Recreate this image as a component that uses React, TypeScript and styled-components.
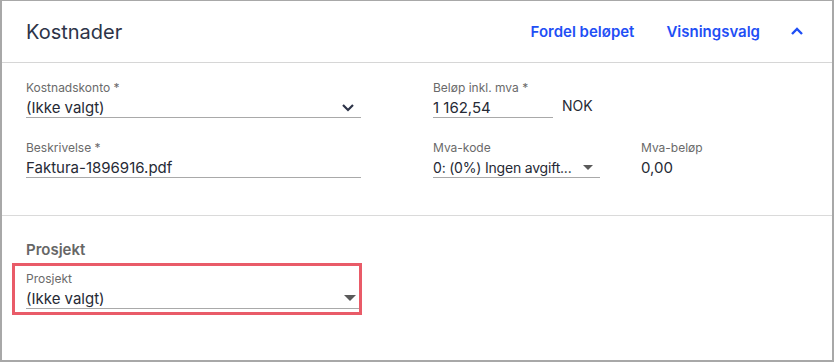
import React, { FC } from 'react'
import styled, { createGlobalStyle } from 'styled-components'

const GlobalStyle = createGlobalStyle`
  html, body {
    margin: 0;
    padding: 0;
    background: #ffffff;
  }
  body {
    font-family: Inter, 'Noto Sans', 'Liberation Sans', sans-serif;
  }
`

const Frame = styled.div`
  width: 834px;
  height: 362px;
  box-sizing: border-box;
  border: 2px solid #a8a8a8;
  border-top-width: 1px;
  background: #fff;
  display: flex;
  flex-direction: column;
`

const Header = styled.div`
  height: 62px;
  flex-shrink: 0;
  box-sizing: border-box;
  display: flex;
  align-items: center;
  padding: 0 28px 0 24px;
  border-bottom: 1px solid #d6d6d6;
`

const Title = styled.h2`
  margin: 0;
  flex: 1;
  font-size: 20px;
  font-weight: 400;
  color: #2d3448;
`

const Actions = styled.div`
  display: flex;
  align-items: center;
  gap: 32px;
`

const LinkButton = styled.button`
  border: 0;
  background: none;
  padding: 0;
  font-family: inherit;
  font-size: 15px;
  font-weight: 600;
  color: #1f4ff5;
  cursor: pointer;
`

const CollapseButton = styled(LinkButton)`
  display: flex;
  align-items: center;
  margin-left: -2px;
`

const FieldsSection = styled.div`
  display: grid;
  grid-template-columns: 335px 1fr;
  grid-auto-rows: min-content;
  align-content: start;
  column-gap: 72px;
  row-gap: 22px;
  padding: 17px 24px 0 24px;
  height: 153px;
  flex-shrink: 0;
  box-sizing: border-box;
  border-bottom: 1px solid #dadada;
`

const InlineRow = styled.div`
  display: flex;
  align-items: flex-end;
  gap: 41px;
`

const Field = styled.div<{ $width?: number }>`
  display: flex;
  flex-direction: column;
  min-width: 0;
  width: ${({ $width }) => ($width ? `${$width}px` : 'auto')};
`

const Label = styled.span`
  font-size: 12px;
  line-height: 16px;
  color: #6a6a6a;
  white-space: nowrap;
`

const ValueLine = styled.div<{ $underline?: boolean }>`
  display: flex;
  align-items: center;
  justify-content: space-between;
  gap: 6px;
  height: 22px;
  box-sizing: border-box;
  padding-top: 1px;
  border-bottom: 1px solid ${({ $underline = true }) => ($underline ? '#a9a9a9' : 'transparent')};
  font-size: 15px;
  color: #262a35;
  white-space: nowrap;
`

const ValueText = styled.span<{ $tight?: boolean }>`
  min-width: 0;
  font-size: ${({ $tight }) => ($tight ? '14px' : 'inherit')};
  letter-spacing: ${({ $tight }) => ($tight ? '-0.2px' : 'normal')};
`

const IconSlot = styled.span<{ $right: number }>`
  display: flex;
  flex-shrink: 0;
  margin-right: ${({ $right }) => $right}px;
`

const Suffix = styled.span`
  font-size: 14px;
  color: #262a35;
  padding-bottom: 4px;
  margin-left: -32px;
`

const ProjectSection = styled.div`
  padding: 24px 24px 0;
  display: flex;
  flex-direction: column;
`

const SectionTitle = styled.h3`
  margin: 0 0 3px;
  font-size: 15px;
  line-height: 20px;
  font-weight: 600;
  color: #666;
`

const Highlight = styled.div`
  width: 350px;
  box-sizing: border-box;
  margin-left: -14px;
  border: 3px solid #e95b68;
  padding: 5px 0 3px 11px;
`

const ChevronDown: FC = () => (
  <svg width="14" height="9" viewBox="0 0 14 9" fill="none">
    <path d="M2 2l5 5 5-5" stroke="#2d3448" strokeWidth="2.2" />
  </svg>
)

const ChevronUp: FC = () => (
  <svg width="14" height="9" viewBox="0 0 14 9" fill="none">
    <path d="M2 7l5-5 5 5" stroke="#1f4ff5" strokeWidth="2.4" />
  </svg>
)

const Caret: FC<{ size?: number }> = ({ size = 10 }) => (
  <svg width={size} height={size / 2} viewBox="0 0 10 5">
    <path d="M0 0h10L5 5z" fill="#5a5a5a" />
  </svg>
)

export default function App() {
  return (
    <>
      <GlobalStyle />
      <Frame>
        <Header>
          <Title>Kostnader</Title>
          <Actions>
            <LinkButton>Fordel beløpet</LinkButton>
            <LinkButton>Visningsvalg</LinkButton>
            <CollapseButton aria-label="Skjul">
              <ChevronUp />
            </CollapseButton>
          </Actions>
        </Header>
        <FieldsSection>
          <Field>
            <Label>Kostnadskonto *</Label>
            <ValueLine>
              <ValueText>(Ikke valgt)</ValueText>
              <IconSlot $right={6}>
                <ChevronDown />
              </IconSlot>
            </ValueLine>
          </Field>
          <InlineRow>
            <Field $width={120}>
              <Label>Beløp inkl. mva *</Label>
              <ValueLine>
                <ValueText>1 162,54</ValueText>
              </ValueLine>
            </Field>
            <Suffix>NOK</Suffix>
          </InlineRow>
          <Field>
            <Label>Beskrivelse *</Label>
            <ValueLine>
              <ValueText>Faktura-1896916.pdf</ValueText>
            </ValueLine>
          </Field>
          <InlineRow>
            <Field $width={167}>
              <Label>Mva-kode</Label>
              <ValueLine>
                <ValueText $tight>0: (0%) Ingen avgift...</ValueText>
                <IconSlot $right={7}>
                  <Caret />
                </IconSlot>
              </ValueLine>
            </Field>
            <Field>
              <Label>Mva-beløp</Label>
              <ValueLine $underline={false}>
                <ValueText>0,00</ValueText>
              </ValueLine>
            </Field>
          </InlineRow>
        </FieldsSection>
        <ProjectSection>
          <SectionTitle>Prosjekt</SectionTitle>
          <Highlight>
            <Field>
              <Label>Prosjekt</Label>
              <ValueLine>
                <ValueText>(Ikke valgt)</ValueText>
                <IconSlot $right={3}>
                  <Caret size={12} />
                </IconSlot>
              </ValueLine>
            </Field>
          </Highlight>
        </ProjectSection>
      </Frame>
    </>
  )
}
